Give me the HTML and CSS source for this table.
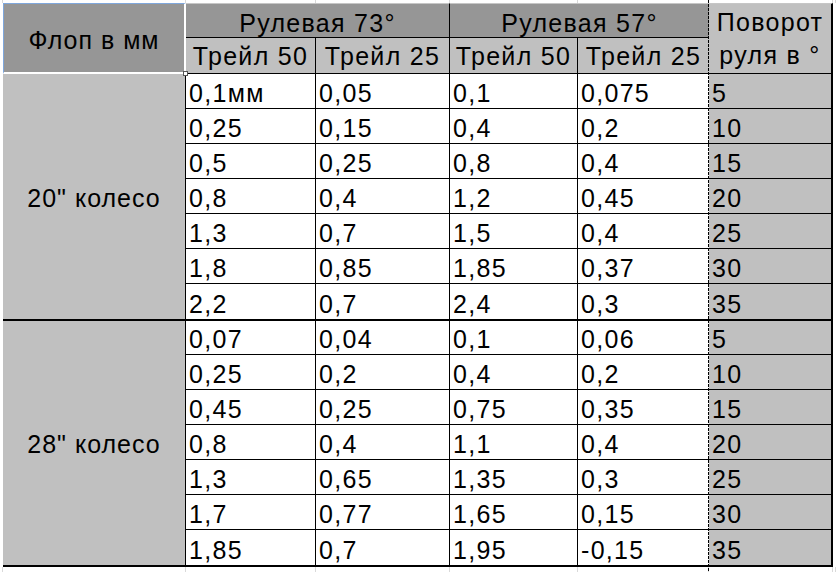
FILE: index.html
```html
<!DOCTYPE html>
<html lang="ru">
<head>
<meta charset="utf-8">
<title>Флоп</title>
<link rel="stylesheet" href="styles.css">
</head>
<body>
<div class="sheet">
  <div class="strip top"><span></span><span></span><span></span><span></span><span></span><span></span><span></span><span></span></div>
  <div class="main">
    <div class="edge"></div>
    <div class="table">
      <div class="c flop">Флоп в мм</div>
      <div class="c h h73">Рулевая 73°</div>
      <div class="c h h57">Рулевая 57°</div>
      <div class="c turn">Поворот<br>руля в °</div>
      <div class="c t">Трейл 50</div>
      <div class="c t">Трейл 25</div>
      <div class="c t">Трейл 50</div>
      <div class="c t c4">Трейл 25</div>
      <div class="c wheel w1">20" колесо</div>
      <div class="c wheel w2">28" колесо</div>

      <div class="row"><div class="c">0,1мм</div><div class="c">0,05</div><div class="c">0,1</div><div class="c c4">0,075</div><div class="c n">5</div></div>
      <div class="row"><div class="c">0,25</div><div class="c">0,15</div><div class="c">0,4</div><div class="c c4">0,2</div><div class="c n">10</div></div>
      <div class="row"><div class="c">0,5</div><div class="c">0,25</div><div class="c">0,8</div><div class="c c4">0,4</div><div class="c n">15</div></div>
      <div class="row"><div class="c">0,8</div><div class="c">0,4</div><div class="c">1,2</div><div class="c c4">0,45</div><div class="c n">20</div></div>
      <div class="row"><div class="c">1,3</div><div class="c">0,7</div><div class="c">1,5</div><div class="c c4">0,4</div><div class="c n">25</div></div>
      <div class="row"><div class="c">1,8</div><div class="c">0,85</div><div class="c">1,85</div><div class="c c4">0,37</div><div class="c n">30</div></div>
      <div class="row end"><div class="c">2,2</div><div class="c">0,7</div><div class="c">2,4</div><div class="c c4">0,3</div><div class="c n">35</div></div>

      <div class="row"><div class="c">0,07</div><div class="c">0,04</div><div class="c">0,1</div><div class="c c4">0,06</div><div class="c n">5</div></div>
      <div class="row"><div class="c">0,25</div><div class="c">0,2</div><div class="c">0,4</div><div class="c c4">0,2</div><div class="c n">10</div></div>
      <div class="row"><div class="c">0,45</div><div class="c">0,25</div><div class="c">0,75</div><div class="c c4">0,35</div><div class="c n">15</div></div>
      <div class="row"><div class="c">0,8</div><div class="c">0,4</div><div class="c">1,1</div><div class="c c4">0,4</div><div class="c n">20</div></div>
      <div class="row"><div class="c">1,3</div><div class="c">0,65</div><div class="c">1,35</div><div class="c c4">0,3</div><div class="c n">25</div></div>
      <div class="row"><div class="c">1,7</div><div class="c">0,77</div><div class="c">1,65</div><div class="c c4">0,15</div><div class="c n">30</div></div>
      <div class="row end"><div class="c">1,85</div><div class="c">0,7</div><div class="c">1,95</div><div class="c c4">-0,15</div><div class="c n">35</div></div>
    </div>
    <div class="edge"></div>
  </div>
  <div class="strip bottom"><span></span><span></span><span></span><span></span><span></span><span></span><span></span><span></span></div>
  <div class="pagebreak"></div>
  <div class="handle"></div>
</div>
</body>
</html>
```
FILE: styles.css
```css
* { box-sizing: border-box; }
body {
  margin: 0;
  font-family: "Liberation Sans", Arial, sans-serif;
  background: #fff;
}
.sheet {
  position: relative;
  width: 836px;
  height: 572px;
  background: #fff;
  overflow: hidden;
  display: flex;
  flex-direction: column;
}
.strip {
  display: grid;
  grid-template-columns: 3px 183px 130px 134px 128px 131px 124px 3px;
}
.strip span { border-right: 1px solid #d9d9d9; }
.strip.top { height: 3px; }
.strip.bottom { height: 5px; }
.main { display: flex; }
.edge { width: 3px; background: #fff; }
.table {
  display: grid;
  grid-template-columns: 183px 130px 134px 128px 131px 124px;
  grid-template-rows: 35px 36px repeat(6, 35px) 37px 34px repeat(5, 35px) 37px;
  font-size: 25px;
  letter-spacing: 1.3px;
  color: #000;
}
.row { display: contents; }
.c {
  display: flex;
  align-items: flex-end;
  padding: 0 0 1px 3px;
  line-height: 28px;
  border-right: 1px solid #000;
  border-bottom: 1px solid #000;
  background: #fff;
  white-space: nowrap;
  overflow: hidden;
}
.c4 { border-right: none; }
.n { background: #c0c0c0; border-right: 2px solid #000; }
.row.end .c { border-bottom: 2px solid #000; }

.flop {
  grid-column: 1;
  grid-row: 1 / 3;
  background: #969696;
  border-top: 1px solid #7fa7dc;
  border-left: 1px solid #7fa7dc;
  border-right: 2px solid #fff;
  border-bottom: 2px solid #fff;
  justify-content: center;
  align-items: center;
  padding: 4px 0 0 0;
  letter-spacing: 1px;
}
.h {
  background: #969696;
  justify-content: center;
  border-top: 1px solid #c6c6c6;
  padding: 0;
}
.h73 { grid-column: 2 / 4; grid-row: 1; }
.h57 { grid-column: 4 / 6; grid-row: 1; border-right: none; }
.turn {
  grid-column: 6;
  grid-row: 1 / 3;
  background: #c0c0c0;
  border-top: 1px solid #c6c6c6;
  border-right: 2px solid #000;
  justify-content: center;
  align-items: center;
  text-align: center;
  line-height: 33px;
  padding: 1px 0 0 0;
}
.t {
  background: #c0c0c0;
  justify-content: center;
  padding: 0 0 3px 0;
}
.wheel {
  grid-column: 1;
  background: #c0c0c0;
  justify-content: center;
  align-items: center;
  padding: 2px 0 0 0;
  border-bottom: 2px solid #000;
  letter-spacing: 1px;
}
.w1 { grid-row: 3 / 10; }
.w2 { grid-row: 10 / 17; }

.pagebreak {
  position: absolute;
  left: 708px;
  top: 0;
  width: 1px;
  height: 572px;
  background: repeating-linear-gradient(to bottom, #000 0 3px, transparent 3px 4px);
}
.handle {
  position: absolute;
  left: 183px;
  top: 71px;
  width: 5px;
  height: 5px;
  background: #fff;
  border: 1px solid #555;
}
```
